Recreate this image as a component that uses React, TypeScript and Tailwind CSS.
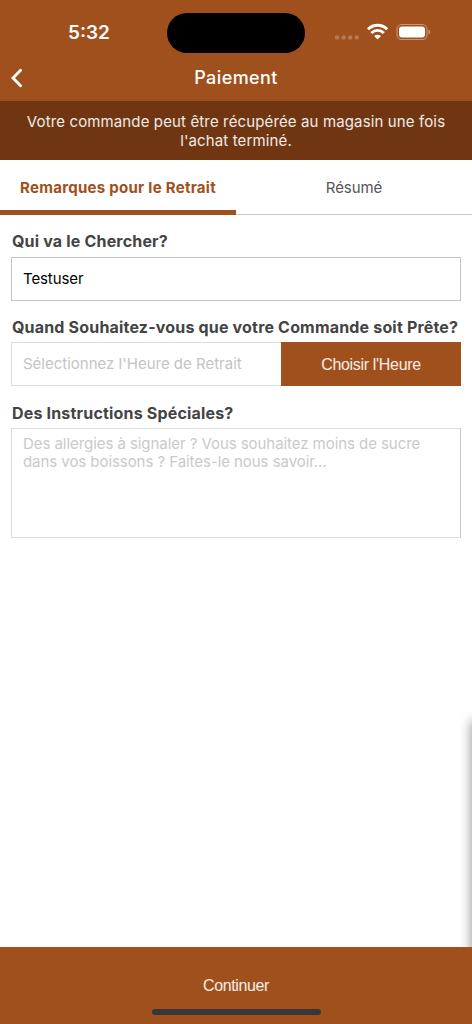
import { useState } from 'react'

const tabs = ['Remarques pour le Retrait', 'Résumé']

function StatusBar() {
  return (
    <div className="relative h-[54px]">
      <span className="absolute left-[68px] top-[21px] whitespace-nowrap text-[19px] leading-6 font-semibold">
        5:32
      </span>
      <div className="absolute left-[167px] top-[12.5px] h-[40.5px] w-[138px] rounded-full bg-black" />
      <svg className="absolute left-[334px] top-[20px]" width="100" height="24" viewBox="0 0 100 24" fill="none">
        <g fill="#fff" fillOpacity="0.24">
          <circle cx="3.1" cy="17.4" r="2.2" />
          <circle cx="9.7" cy="17.4" r="2.2" />
          <circle cx="16.2" cy="17.4" r="2.2" />
          <circle cx="22.8" cy="17.4" r="2.2" />
        </g>
        <g stroke="#fff" strokeWidth="2.9">
          <path d="M34 9.2C39.5 3.9 47.7 3.9 53.2 9.2" />
          <path d="M37.3 13C41 9.5 46.2 9.5 49.9 13" />
        </g>
        <path d="M40.2 16C42.1 14.3 45.1 14.3 47 16L43.6 19.5Z" fill="#fff" />
        <rect x="63" y="4.5" width="30" height="15" rx="4.6" stroke="#fff" strokeOpacity="0.4" strokeWidth="1.1" />
        <rect x="65" y="6.6" width="26" height="10.8" rx="3" fill="#fff" />
        <path d="M94.6 9.7C96.8 10.2 96.8 13.8 94.6 14.3Z" fill="#fff" fillOpacity="0.45" />
      </svg>
    </div>
  )
}

export default function App() {
  const [active, setActive] = useState(0)

  return (
    <div className="relative flex h-[1024px] w-[472px] flex-col overflow-hidden bg-white font-['Inter',sans-serif] text-[#444]">
      {/* Header */}
      <header className="bg-[#a0501c] text-white">
        <StatusBar />
        <div className="relative flex h-[47px] items-center justify-center">
          <button className="absolute left-[10px] top-[13px]" aria-label="Retour">
            <svg width="14" height="22" viewBox="0 0 14 22" fill="none" stroke="#fff" strokeWidth="2.8" strokeLinecap="round">
              <path d="M10.6 3.2L3 11L10.6 18.8" />
            </svg>
          </button>
          <h1 className="text-[18px] font-medium tracking-[0.42px]">Paiement</h1>
        </div>
      </header>

      <div className="h-[59px] bg-[#703612] pt-[11px] text-center text-[15px] leading-[19px] tracking-[0.13px] whitespace-nowrap text-white/90">
        Votre commande peut être récupérée au magasin une fois
        <br />
        l'achat terminé.
      </div>

      {/* Tabs */}
      <nav className="flex h-[55px] border-b border-[#c8c8c8] text-[15px]">
        {tabs.map((tab, i) => (
          <button
            key={tab}
            onClick={() => setActive(i)}
            className={
              i === active
                ? 'relative flex-1 whitespace-nowrap pt-[2px] font-bold tracking-[0.28px] text-[#a0501c]'
                : 'relative flex-1 whitespace-nowrap pt-[2px] tracking-[-0.1px] text-[#555]'
            }
          >
            {tab}
            {i === active && <span className="absolute -bottom-px left-0 h-[5px] w-full bg-[#a0501c]" />}
          </button>
        ))}
      </nav>

      {/* Form */}
      <main className="flex-1 px-[11px] pt-[16px] text-[15px]">
        <label className="block h-[26px] pl-px text-base leading-5 font-bold tracking-[0.18px] whitespace-nowrap">
          Qui va le Chercher?
        </label>
        <input
          className="block h-11 w-full border border-[#c4c4c4] px-[11px] pb-[2px] tracking-[-0.1px] text-black outline-none"
          defaultValue="Testuser"
        />

        <label className="mt-[16px] block h-[25px] pl-px text-base leading-5 font-bold tracking-[0.18px] whitespace-nowrap">
          Quand Souhaitez-vous que votre Commande soit Prête?
        </label>
        <div className="flex h-11">
          <div className="flex w-[270px] items-center border border-r-0 border-[#dedede] px-[11px] pt-px whitespace-nowrap text-[#c4c4c4]">
            Sélectionnez l'Heure de Retrait
          </div>
          <button className="flex-1 bg-[#a0501c] pt-px font-['Liberation_Sans',sans-serif] text-base tracking-[-0.32px] text-white/90">
            Choisir l'Heure
          </button>
        </div>

        <label className="mt-[17px] block h-[25px] pl-px text-base leading-5 font-bold tracking-[0.18px] whitespace-nowrap">
          Des Instructions Spéciales?
        </label>
        <div className="h-[110px] border border-[#dedede] border-r-[#c8c8c8] px-[11px] pt-[6px] leading-[18px] tracking-[-0.06px] whitespace-nowrap text-[#c9c9cd]">
          Des allergies à signaler ? Vous souhaitez moins de sucre
          <br />
          dans vos boissons ? Faites-le nous savoir...
        </div>
      </main>

      <div className="absolute top-[722px] left-[472px] h-[300px] w-10 shadow-[0_0_11px_1px_rgba(0,0,0,0.4)]" />

      <footer className="relative flex h-[77px] justify-center bg-[#a0501c] text-white/90">
        <button className="h-[77px] font-['Liberation_Sans',sans-serif] text-base tracking-[-0.38px]">Continuer</button>
        <span className="absolute bottom-[9px] left-[151.5px] h-[6px] w-[169px] rounded-full bg-[#373737]" />
      </footer>
    </div>
  )
}
